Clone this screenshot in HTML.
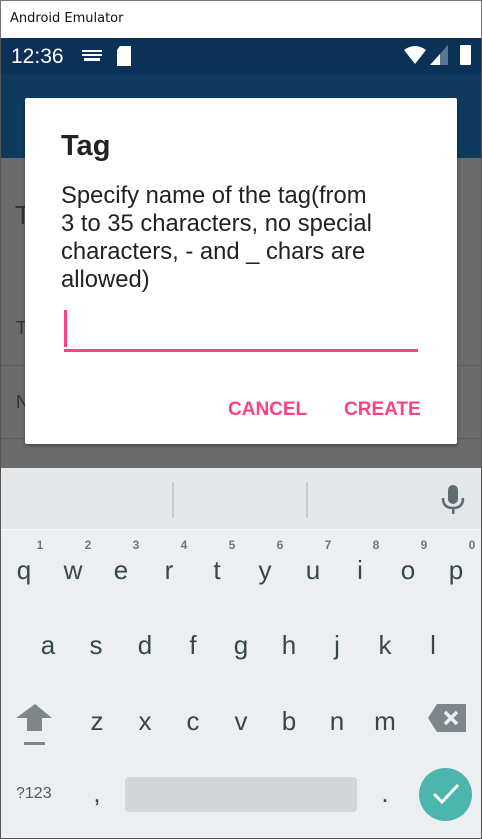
<!DOCTYPE html>
<html><head><style>
*{margin:0;padding:0;box-sizing:border-box}
body{width:482px;height:839px;position:relative;overflow:hidden;font-family:"Liberation Sans",Roboto,sans-serif;background:#6b6b6b}
.a{position:absolute}
.k{position:absolute;font-size:26px;color:#37474f;transform:translateX(-50%);line-height:1}
.n{position:absolute;font-size:12px;font-weight:bold;color:#6b777d;transform:translateX(-50%);line-height:1}
</style></head><body>
<div class="a" style="left:0;top:0;width:482px;height:38px;background:#fff;border:1px solid #777;border-bottom:none"></div>
<div class="a" style="left:10px;top:11px;color:#111;font-family:'DejaVu Sans',sans-serif;font-size:13px">Android Emulator</div>
<div class="a" style="left:0;top:38px;width:482px;height:36px;background:#0b3157"></div>
<div class="a" style="left:11px;top:45px;font-size:21px;color:#fff">12:36</div>
<svg class="a" style="left:82px;top:50px" width="20" height="12"><g fill="#fff"><rect x="0" y="0" width="20" height="2"/><rect x="0" y="4" width="20" height="2"/><rect x="2" y="8" width="16" height="3"/></g></svg>
<svg class="a" style="left:116px;top:46px" width="16" height="20"><path d="M4 0H15V20H1V4Z" fill="#fff"/></svg>
<svg class="a" style="left:404px;top:46px" width="22" height="18"><path d="M0 4Q11 -4 22 4L11 18Z" fill="#fff"/></svg>
<svg class="a" style="left:430px;top:45px" width="18" height="20"><path d="M0 20L18 0V20Z" fill="#5c7590"/><path d="M0 20L10 9V20Z" fill="#fff"/></svg>
<div class="a" style="left:460px;top:45px;width:11px;height:20px;background:#fff;border-radius:1px"></div>
<div class="a" style="left:0;top:74px;width:482px;height:84px;background:#0f3a5e"></div>
<div class="a" style="left:1px;top:158px;width:480px;height:310px;background:#6b6b6b"></div>
<div class="a" style="left:15px;top:200px;font-size:26px;color:#333">T</div>
<div class="a" style="left:16px;top:318px;font-size:18px;color:#333">T</div>
<div class="a" style="left:0;top:365px;width:482px;height:1px;background:#5a5a5a"></div>
<div class="a" style="left:16px;top:392px;font-size:18px;color:#333">N</div>
<div class="a" style="left:0;top:438px;width:482px;height:1px;background:#5a5a5a"></div>
<div class="a" style="left:25px;top:98px;width:432px;height:346px;background:#fff;border-radius:2px;box-shadow:0 2px 3px rgba(0,0,0,.3)"></div>
<div class="a" style="left:61px;top:130px;font-size:29px;font-weight:bold;color:#222">Tag</div>
<div class="a" style="left:61px;top:182px;font-size:23.8px;line-height:28px;color:#222;white-space:nowrap">Specify name of the tag(from<br>3 to 35 characters, no special<br>characters, - and _ chars are<br>allowed)</div>
<div class="a" style="left:64px;top:310px;width:3px;height:37px;background:#ff4081"></div>
<div class="a" style="left:64px;top:349px;width:354px;height:3px;background:#ff4081"></div>
<div class="a" style="left:228px;top:399px;font-size:19px;font-weight:bold;color:#ff4081">CANCEL</div>
<div class="a" style="left:344px;top:399px;font-size:19px;font-weight:bold;color:#ff4081">CREATE</div>
<div class="a" style="left:1px;top:468px;width:480px;height:61px;background:#e3e7ea"></div>
<div class="a" style="left:1px;top:529px;width:480px;height:310px;background:#eceff1;border-top:1px solid #f5f7f8"></div>
<div class="a" style="left:172px;top:482px;width:2px;height:36px;background:#c9cdd0"></div>
<div class="a" style="left:306px;top:482px;width:2px;height:36px;background:#c9cdd0"></div>
<svg class="a" style="left:441px;top:485px" width="24" height="30"><rect x="7" y="0" width="10" height="19" rx="5" fill="#5f6b73"/><path d="M2 13Q2 23 12 23Q22 23 22 13" stroke="#5f6b73" stroke-width="2.5" fill="none"/><rect x="11" y="22" width="2.5" height="7" fill="#5f6b73"/></svg>
<div class="n" style="left:40px;top:539px">1</div><div class="n" style="left:88px;top:539px">2</div><div class="n" style="left:136px;top:539px">3</div><div class="n" style="left:184px;top:539px">4</div><div class="n" style="left:232px;top:539px">5</div><div class="n" style="left:280px;top:539px">6</div><div class="n" style="left:328px;top:539px">7</div><div class="n" style="left:376px;top:539px">8</div><div class="n" style="left:424px;top:539px">9</div><div class="n" style="left:472px;top:539px">0</div>
<div class="k" style="left:24px;top:557px">q</div><div class="k" style="left:73px;top:557px">w</div><div class="k" style="left:121px;top:557px">e</div><div class="k" style="left:169px;top:557px">r</div><div class="k" style="left:217px;top:557px">t</div><div class="k" style="left:265px;top:557px">y</div><div class="k" style="left:313px;top:557px">u</div><div class="k" style="left:360px;top:557px">i</div><div class="k" style="left:408px;top:557px">o</div><div class="k" style="left:456px;top:557px">p</div>
<div class="k" style="left:48px;top:632px">a</div><div class="k" style="left:96px;top:632px">s</div><div class="k" style="left:145px;top:632px">d</div><div class="k" style="left:193px;top:632px">f</div><div class="k" style="left:241px;top:632px">g</div><div class="k" style="left:289px;top:632px">h</div><div class="k" style="left:337px;top:632px">j</div><div class="k" style="left:385px;top:632px">k</div><div class="k" style="left:433px;top:632px">l</div>
<div class="k" style="left:97px;top:708px">z</div><div class="k" style="left:145px;top:708px">x</div><div class="k" style="left:193px;top:708px">c</div><div class="k" style="left:241px;top:708px">v</div><div class="k" style="left:289px;top:708px">b</div><div class="k" style="left:337px;top:708px">n</div><div class="k" style="left:385px;top:708px">m</div>
<svg class="a" style="left:16px;top:704px" width="38" height="42"><path d="M0 14L19 0L36 14H26V27H11V14Z" fill="#7c868b"/><rect x="8" y="38" width="21" height="3" fill="#7c868b"/></svg>
<svg class="a" style="left:428px;top:704px" width="38" height="28"><path d="M9 0H38V28H9L0 14Z" fill="#7c868b"/><path d="M17 8L29 20M29 8L17 20" stroke="#eceff1" stroke-width="3.5"/></svg>
<div class="a" style="left:16px;top:785px;font-size:16px;color:#4f5b62">?123</div>
<div class="k" style="left:97px;top:780px">,</div>
<div class="a" style="left:125px;top:777px;width:232px;height:35px;background:#d2d6d9;border-radius:4px"></div>
<div class="k" style="left:385px;top:780px">.</div>
<div class="a" style="left:419px;top:768px;width:53px;height:53px;border-radius:50%;background:#4db6ac"></div>
<svg class="a" style="left:431px;top:782px" width="30" height="24"><path d="M3 12L11 20L27 3" stroke="#fff" stroke-width="3" fill="none"/></svg>
<div class="a" style="left:0;top:38px;width:1px;height:801px;background:#555"></div>
<div class="a" style="left:481px;top:38px;width:1px;height:801px;background:#555"></div>
<div class="a" style="left:0;top:838px;width:482px;height:1px;background:#555"></div>
</body></html>
